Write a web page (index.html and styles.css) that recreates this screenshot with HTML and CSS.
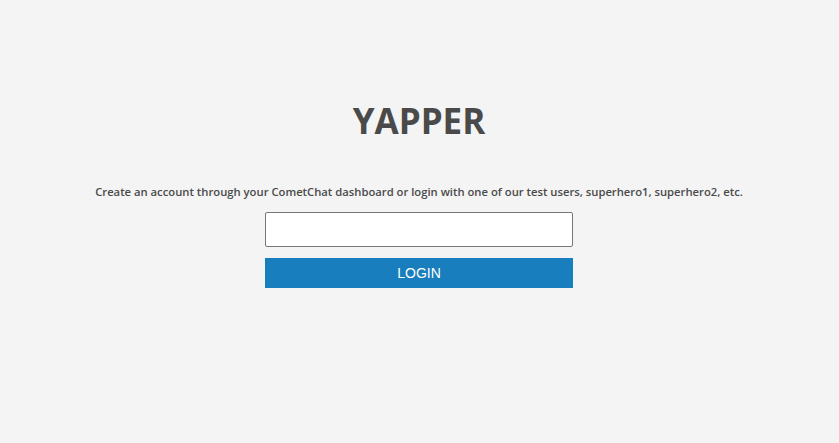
FILE: index.html
```html
<!DOCTYPE html>
<html>
<head>
<meta charset="utf-8">
<link rel="stylesheet" href="styles.css">
</head>
<body>
<div class="login">
  <h1 class="title">YAPPER</h1>
  <p class="hint">Create an account through your CometChat dashboard or login with one of our test users, superhero1, superhero2, etc.</p>
  <input class="field" type="text">
  <button class="btn">LOGIN</button>
</div>
</body>
</html>
```
FILE: styles.css
```css
html, body {
  margin: 0;
  padding: 0;
  background: #f4f4f4;
  height: 100%;
}
.login {
  display: flex;
  flex-direction: column;
  align-items: center;
  padding-top: 97px;
  padding-right: 1px;
  font-family: "Open Sans", sans-serif;
  color: #4a4a4a;
}
.title {
  margin: 0;
  font-size: 35px;
  font-weight: 700;
  line-height: 48px;
  letter-spacing: 0;
}
.hint {
  margin: 39px 0 0;
  font-size: 11.25px;
  font-weight: 600;
  line-height: 16px;
}
.field {
  margin-top: 12px;
  width: 308px;
  height: 35px;
  box-sizing: border-box;
  border: 1px solid #767676;
  border-radius: 2px;
  background: #fff;
  padding: 0 6px;
}
.btn {
  margin-top: 11px;
  width: 308px;
  height: 30px;
  border: none;
  background: #187ebe;
  color: #fff;
  font-family: "Liberation Sans", Arial, sans-serif;
  font-size: 14px;
  padding: 0;
}
```
